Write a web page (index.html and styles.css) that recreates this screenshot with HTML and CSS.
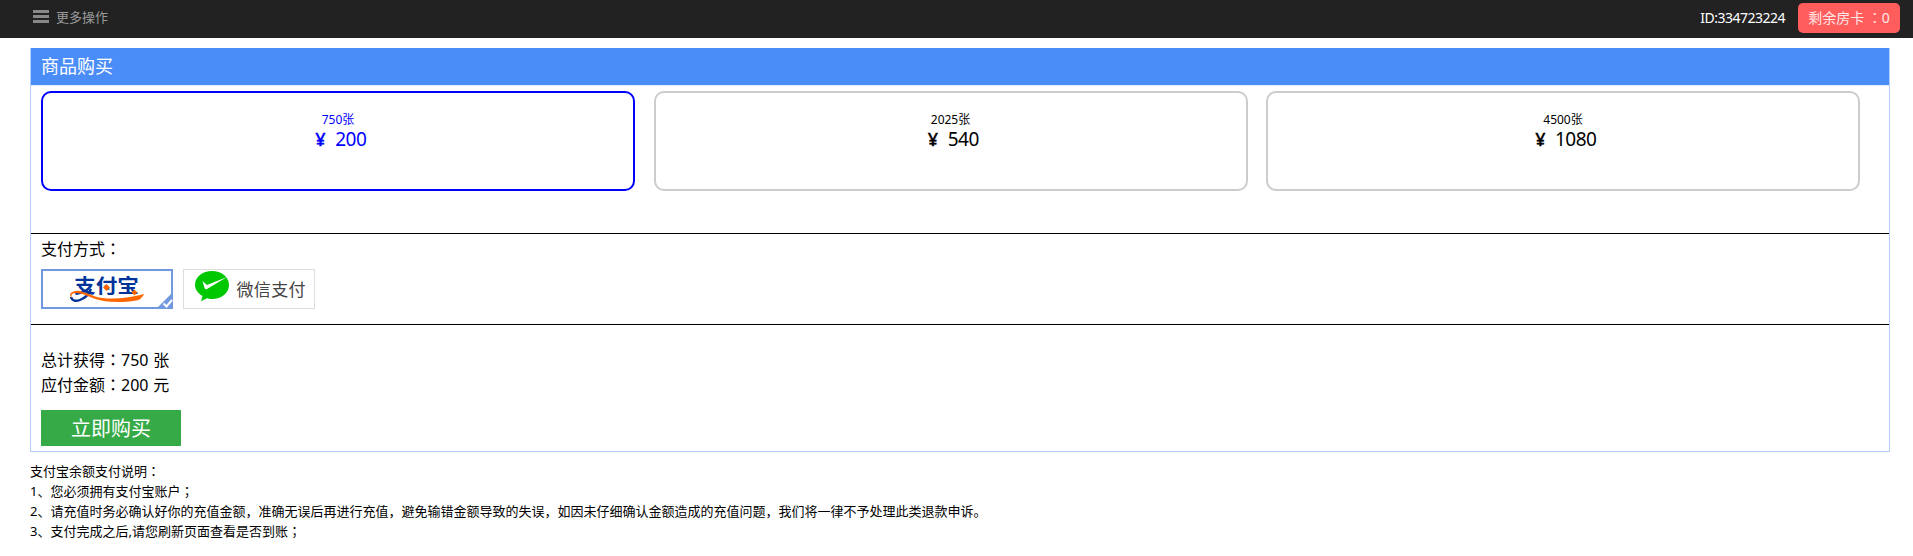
FILE: index.html
```html
<!DOCTYPE html>
<html lang="zh-CN">
<head>
<meta charset="utf-8">
<title>商品购买</title>
<link rel="stylesheet" href="styles.css">
</head>
<body>
<header class="topbar">
  <a class="menu">
    <svg class="menu-icon" width="16" height="13" viewBox="0 0 16 13"><path d="M0 0h16v3H0zM0 5h16v3H0zM0 10h16v3H0z" fill="#888"/></svg>
    <span>更多操作</span>
  </a>
  <div class="account">
    <span class="user-id">ID:334723224</span>
    <span class="cards-left">剩余房卡 <i class="mid" lang="zh-TW">：</i>0</span>
  </div>
</header>
<main class="panel">
  <h1 class="panel-title">商品购买</h1>
  <section class="products">
    <div class="product selected"><span class="count">750张</span><span class="price"><i class="yen">¥</i> 200</span></div>
    <div class="product"><span class="count">2025张</span><span class="price"><i class="yen">¥</i> 540</span></div>
    <div class="product"><span class="count">4500张</span><span class="price"><i class="yen">¥</i> 1080</span></div>
  </section>
  <section class="payment">
    <div class="label">支付方式<i class="mid" lang="zh-TW">：</i></div>
    <div class="methods">
      <div class="method alipay">
        <svg width="132" height="40" viewBox="0 0 132 40">
          <text class="ali-text" x="33" y="24" textLength="65" lengthAdjust="spacingAndGlyphs">支付宝</text>
          <path d="M30 28C31 32 35 32.500 39 31C44 29 48 25 50 20" fill="none" stroke="#039" stroke-width="2.400"/>
          <path d="M31 29C26 25 32 20.500 39 22C47 24 54 29 66 29.500C80 30 92 28 103.500 25C100.500 28.500 99.500 31 95 31.500C80 34 64 33.500 53 29.500C46 27 41 24 35 24C31 24 29.500 26 31 29Z" fill="#f60"/>
          <path d="M65.500 15l3.500 3.500-3.500 3.500-3.500-3.500zM93.500 20.500l3 3-3 3-3-3z" fill="#f60"/>
          <path d="M132 23v17h-17z" fill="#7099df"/>
          <path d="M122.500 34.500l3 3 5.500-6.500" fill="none" stroke="#fff" stroke-width="2"/>
        </svg>
      </div>
      <div class="method wechat">
        <svg width="132" height="40" viewBox="0 0 132 40">
          <path d="M29 2C38.500 2 46 8 46 16S38.500 30 29 30C27 30 25.500 29.700 24 29.200L18 32.300L19.500 27C15 24.500 12 20.500 12 16C12 8 19.500 2 29 2Z" fill="#00c800"/>
          <path d="M19.500 12L24 16L44 8L24 20C22.500 20.500 22 20 21.500 19Z" fill="#fff"/>
          <text class="wx-text" x="53.500" y="27" textLength="69">微信支付</text>
        </svg>
      </div>
    </div>
  </section>
  <section class="summary">
    <div>总计获得<i class="mid" lang="zh-TW">：</i>750 张</div>
    <div>应付金额<i class="mid" lang="zh-TW">：</i>200 元</div>
    <button class="buy">立即购买</button>
  </section>
</main>
<footer class="notes">
  <div>支付宝余额支付说明<i class="mid" lang="zh-TW">：</i></div>
  <div>1、您必须拥有支付宝账户<i class="mid" lang="zh-TW">；</i></div>
  <div>2、请充值时务必确认好你的充值金额，准确无误后再进行充值，避免输错金额导致的失误，如因未仔细确认金额造成的充值问题，我们将一律不予处理此类退款申诉。</div>
  <div>3、支付完成之后,请您刷新页面查看是否到账<i class="mid" lang="zh-TW">；</i></div>
</footer>
</body>
</html>
```
FILE: styles.css
```css
* { box-sizing: border-box; }
body {
  margin: 0;
  background: #fff;
  color: #000;
  font-family: "Noto Sans", "Noto Sans CJK SC", sans-serif;
  font-weight: 400;
  overflow: hidden;
}
i { font-style: normal; }
.mid { font-family: "Noto Sans CJK TC", sans-serif; line-height: 1; }
.topbar {
  height: 38px;
  background: #222;
  display: flex;
  justify-content: space-between;
  padding: 0 13px 0 33px;
}
.menu {
  display: flex;
  gap: 7px;
  color: #999;
  font-size: 13px;
  line-height: 35px;
}
.menu-icon { margin-top: 10px; }
.account { display: flex; gap: 13px; font-size: 14px; }
.user-id { color: #fff; line-height: 36px; letter-spacing: -0.5px; }
.cards-left {
  width: 102px;
  height: 30px;
  margin-top: 3px;
  border-radius: 5px;
  background: #ff5c5c;
  color: #ffe6e6;
  line-height: 29px;
  text-align: center;
  white-space: nowrap;
}
.panel {
  width: 1860px;
  height: 404px;
  margin: 10px 0 0 30px;
  border: 1px solid #b3cef8;
  border-top: 0;
}
.panel-title {
  margin: 0;
  height: 38px;
  padding-left: 10px;
  background: #4b8df8;
  border-bottom: 1px solid #e4eefe;
  color: #fff;
  font-size: 18px;
  font-weight: 400;
  line-height: 37px;
}
.products {
  display: grid;
  grid-template-columns: repeat(3, 594px);
  column-gap: 18.5px;
  height: 148px;
  padding: 5px 10px 0;
  border-bottom: 1px solid #000;
}
.product {
  height: 100px;
  border: 2px solid #ccc;
  border-radius: 10px;
  padding-top: 18px;
  display: flex;
  flex-direction: column;
  align-items: center;
}
.selected { border-color: #00f; color: #00f; }
.count { font-size: 12px; line-height: 17px; }
.price { font-size: 19px; line-height: 22px; letter-spacing: -0.5px; }
.yen { display: inline-block; width: 21px; text-align: center; font-size: 18px; font-weight: 500; -webkit-text-stroke: 0.3px; }
.payment { height: 91px; padding-left: 10px; border-bottom: 1px solid #000; }
.label { height: 35px; font-size: 16px; line-height: 31px; }
.methods { display: flex; gap: 10px; }
.method { width: 132px; height: 40px; display: flex; }
.method svg { flex: none; margin: -2px; }
.alipay { border: 2px solid #7099df; }
.wechat { border: 1px solid #ddd; }
.method.wechat svg { margin: -1px; }
.ali-text { font: 700 19px "Noto Sans CJK SC", sans-serif; fill: #039; }
.wx-text { font: 400 17px "Noto Sans CJK SC", sans-serif; fill: #444; }
.summary { padding: 23px 0 0 10px; font-size: 16px; line-height: 25px; word-spacing: 0.7px; }
.buy {
  display: block;
  width: 140px;
  height: 36px;
  margin-top: 12px;
  padding: 0;
  border: 0;
  background: #35aa47;
  color: #fff;
  font: 400 20px/36px "Noto Sans CJK SC", sans-serif;
}
.notes { margin: 9px 0 0 30px; font-size: 13px; line-height: 20px; }
```
